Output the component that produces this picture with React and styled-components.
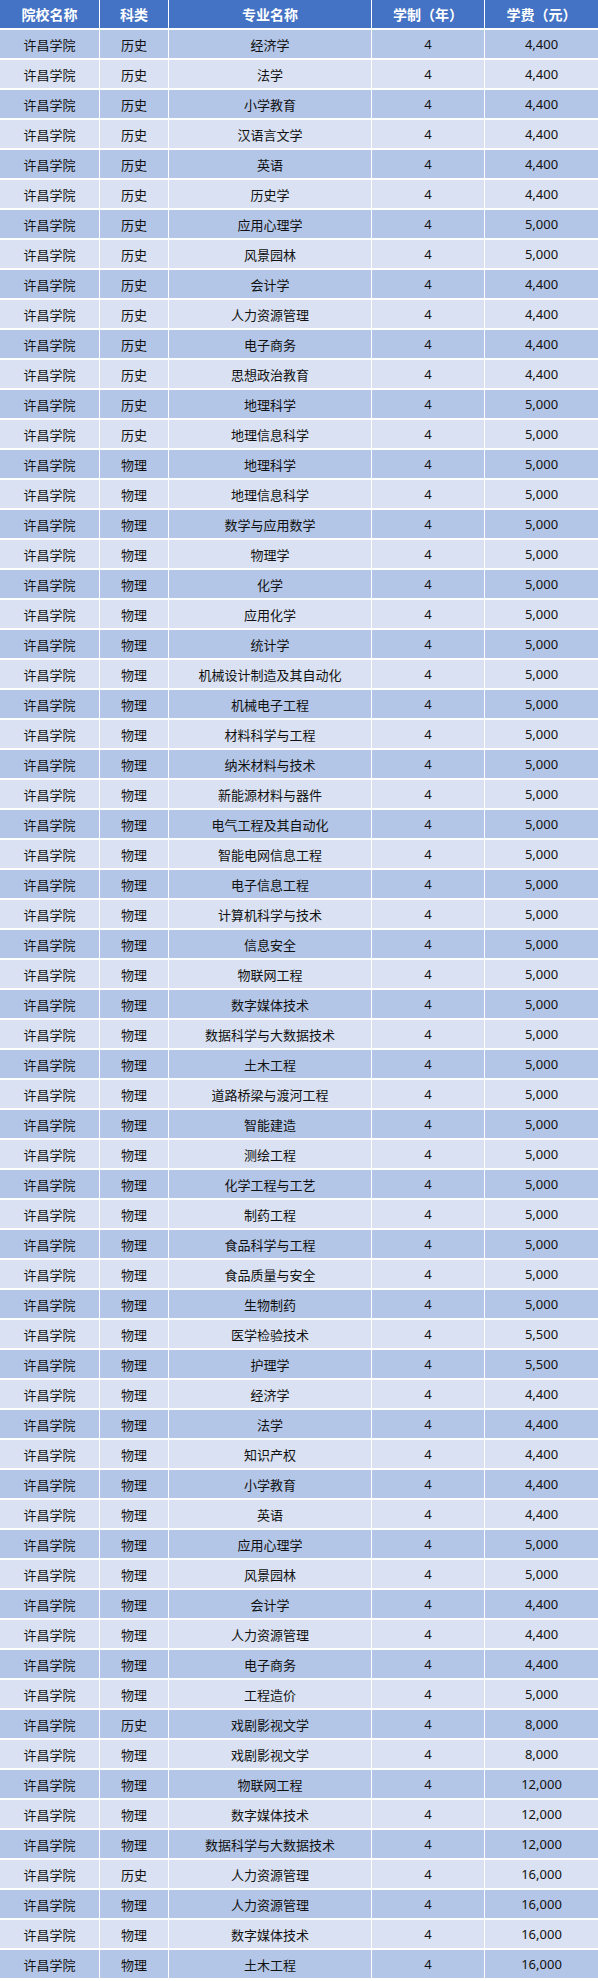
import React from 'react'
import styled, { createGlobalStyle } from 'styled-components'

const GlobalStyle = createGlobalStyle`
  body {
    margin: 0;
    background: #fff;
    font-family: "Noto Sans", "Noto Sans CJK SC", sans-serif;
  }
`

const Grid = styled.div`
  display: grid;
  grid-template-columns: 99px 68px 202px 112px 113px;
  column-gap: 1px;
  row-gap: 2px;
  width: 598px;
  background: #fff;
`

const HeadCell = styled.div`
  height: 28px;
  display: flex;
  align-items: center;
  justify-content: center;
  background: #4472c4;
  color: #fff;
  font-weight: 700;
  font-size: 14px;
  font-family: "Noto Sans CJK SC", sans-serif;
`

const Cell = styled.div`
  height: 28px;
  display: flex;
  align-items: center;
  justify-content: center;
  background: ${p => (p.$odd ? '#b4c6e7' : '#d9e1f2')};
  color: #111;
  font-size: 13px;
`

const rows = [
  ['历史', '经济学', '4,400'],
  ['历史', '法学', '4,400'],
  ['历史', '小学教育', '4,400'],
  ['历史', '汉语言文学', '4,400'],
  ['历史', '英语', '4,400'],
  ['历史', '历史学', '4,400'],
  ['历史', '应用心理学', '5,000'],
  ['历史', '风景园林', '5,000'],
  ['历史', '会计学', '4,400'],
  ['历史', '人力资源管理', '4,400'],
  ['历史', '电子商务', '4,400'],
  ['历史', '思想政治教育', '4,400'],
  ['历史', '地理科学', '5,000'],
  ['历史', '地理信息科学', '5,000'],
  ['物理', '地理科学', '5,000'],
  ['物理', '地理信息科学', '5,000'],
  ['物理', '数学与应用数学', '5,000'],
  ['物理', '物理学', '5,000'],
  ['物理', '化学', '5,000'],
  ['物理', '应用化学', '5,000'],
  ['物理', '统计学', '5,000'],
  ['物理', '机械设计制造及其自动化', '5,000'],
  ['物理', '机械电子工程', '5,000'],
  ['物理', '材料科学与工程', '5,000'],
  ['物理', '纳米材料与技术', '5,000'],
  ['物理', '新能源材料与器件', '5,000'],
  ['物理', '电气工程及其自动化', '5,000'],
  ['物理', '智能电网信息工程', '5,000'],
  ['物理', '电子信息工程', '5,000'],
  ['物理', '计算机科学与技术', '5,000'],
  ['物理', '信息安全', '5,000'],
  ['物理', '物联网工程', '5,000'],
  ['物理', '数字媒体技术', '5,000'],
  ['物理', '数据科学与大数据技术', '5,000'],
  ['物理', '土木工程', '5,000'],
  ['物理', '道路桥梁与渡河工程', '5,000'],
  ['物理', '智能建造', '5,000'],
  ['物理', '测绘工程', '5,000'],
  ['物理', '化学工程与工艺', '5,000'],
  ['物理', '制药工程', '5,000'],
  ['物理', '食品科学与工程', '5,000'],
  ['物理', '食品质量与安全', '5,000'],
  ['物理', '生物制药', '5,000'],
  ['物理', '医学检验技术', '5,500'],
  ['物理', '护理学', '5,500'],
  ['物理', '经济学', '4,400'],
  ['物理', '法学', '4,400'],
  ['物理', '知识产权', '4,400'],
  ['物理', '小学教育', '4,400'],
  ['物理', '英语', '4,400'],
  ['物理', '应用心理学', '5,000'],
  ['物理', '风景园林', '5,000'],
  ['物理', '会计学', '4,400'],
  ['物理', '人力资源管理', '4,400'],
  ['物理', '电子商务', '4,400'],
  ['物理', '工程造价', '5,000'],
  ['历史', '戏剧影视文学', '8,000'],
  ['物理', '戏剧影视文学', '8,000'],
  ['物理', '物联网工程', '12,000'],
  ['物理', '数字媒体技术', '12,000'],
  ['物理', '数据科学与大数据技术', '12,000'],
  ['历史', '人力资源管理', '16,000'],
  ['物理', '人力资源管理', '16,000'],
  ['物理', '数字媒体技术', '16,000'],
  ['物理', '土木工程', '16,000'],
]

const headers = ['院校名称', '科类', '专业名称', '学制（年）', '学费（元）']

export default function App() {
  return (
    <>
      <GlobalStyle />
      <Grid>
        {headers.map(h => <HeadCell key={h}>{h}</HeadCell>)}
        {rows.map(([kind, major, fee], i) => {
          const odd = i % 2 === 0
          return (
            <React.Fragment key={i}>
              <Cell $odd={odd}>许昌学院</Cell>
              <Cell $odd={odd}>{kind}</Cell>
              <Cell $odd={odd}>{major}</Cell>
              <Cell $odd={odd}>4</Cell>
              <Cell $odd={odd}>{fee}</Cell>
            </React.Fragment>
          )
        })}
      </Grid>
    </>
  )
}
